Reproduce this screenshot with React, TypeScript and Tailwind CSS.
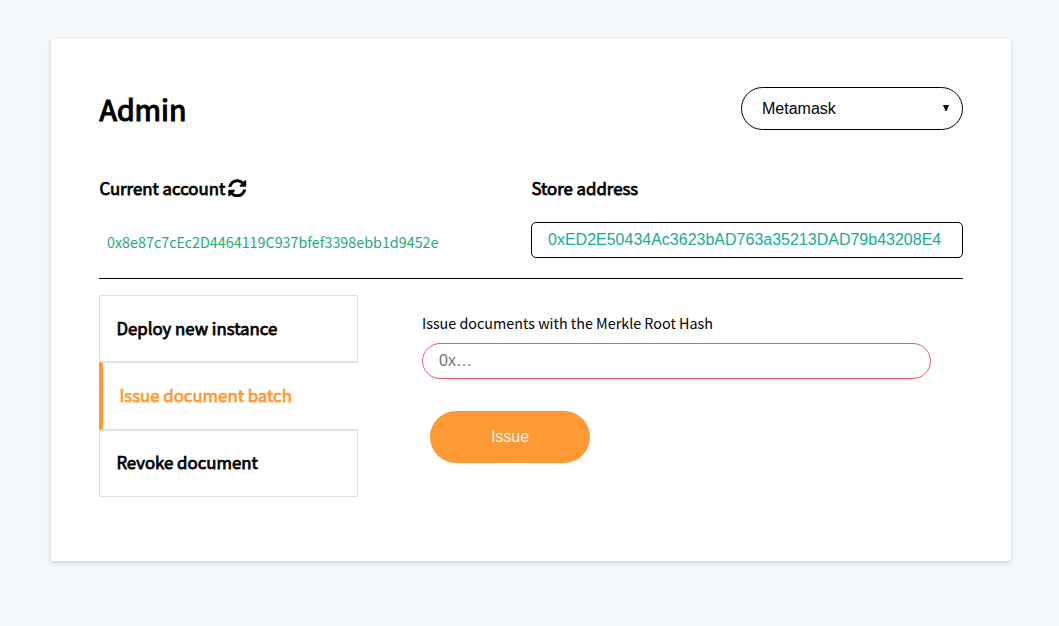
import type { ReactNode } from "react";
import { FaSyncAlt } from "react-icons/fa";

const tabs = ["Deploy new instance", "Issue document batch", "Revoke document"];

function Heading({ children }: { children: ReactNode }) {
  return (
    <h3 className="flex h-6 items-center whitespace-nowrap pl-[0.4px] text-[16.8px] font-normal leading-6 [-webkit-text-stroke:0.75px_currentColor]">
      {children}
    </h3>
  );
}

function Tab({ label, active }: { label: string; active: boolean }) {
  return (
    <button
      className={
        active
          ? "flex h-[67.33px] w-full border-y border-l-4 border-y-[#e3e3e3] border-l-[#ff9933] pl-4 pt-[19.6px] text-[#ff9933]"
          : "flex h-[67.33px] w-full border border-[#e3e3e3] pl-4 pt-[19.6px] text-black"
      }
    >
      <Heading>{label}</Heading>
    </button>
  );
}

export default function App() {
  return (
    <div className="min-h-screen bg-[#f4f8fb] pl-[51px] pt-[39px] font-['Noto_Sans_CJK_SC',sans-serif] text-black">
      <main className="h-[522px] w-[960px] rounded-[3px] bg-white px-12 pt-12 shadow-[0_2px_5px_rgba(0,0,0,0.15)]">
        <header className="flex h-[43px] justify-between">
          <h1 className="pl-[0.5px] text-[28.6px] leading-[44px] [-webkit-text-stroke:1.2px_currentColor]">Admin</h1>
          <button className="flex h-[43px] w-[222px] items-center justify-between rounded-full border border-black pl-5 pr-[13px] font-['Liberation_Sans',sans-serif] text-base">
            <span>Metamask</span>
            <svg className="mb-[2px] h-[6px] w-[6px]" viewBox="0 0 6 6"><path d="M0 0h6L3.5 6h-1z" /></svg>
          </button>
        </header>

        <section className="mt-[46px] grid h-[103px] grid-cols-2 border-b border-black">
          <div>
            <Heading>
              Current account
              <FaSyncAlt className="ml-[3px] h-[18.5px] w-[18.5px]" />
            </Heading>
            <p className="mt-[30px] pl-2 text-[14.33px] leading-6 text-[#1bab77]">
              0x8e87c7cEc2D4464119C937bfef3398ebb1d9452e
            </p>
          </div>
          <div>
            <Heading>Store address</Heading>
            <input
              className="mt-[22px] block h-9 w-full rounded-[5px] border border-black px-4 font-['Liberation_Sans',sans-serif] text-base text-[#17ad94] outline-none"
              defaultValue="0xED2E50434Ac3623bAD763a35213DAD79b43208E4"
            />
          </div>
        </section>

        <section className="mt-4 flex">
          <nav className="w-[259px]">
            {tabs.map((label, i) => (
              <Tab key={label} label={label} active={i === 1} />
            ))}
          </nav>
          <div className="ml-16 w-[509px] pt-4">
            <p className="text-[14.33px] leading-6">Issue documents with the Merkle Root Hash</p>
            <input
              className="mt-2 block h-9 w-full rounded-full border border-[#e25f66] px-4 font-['Liberation_Sans',sans-serif] text-base outline-none placeholder:text-[#757575]"
              placeholder="0x…"
            />
            <button className="ml-2 mt-8 h-[52px] w-40 rounded-full bg-[#ff9933] font-['Liberation_Sans',sans-serif] text-base text-[#fff8f0]">
              Issue
            </button>
          </div>
        </section>
      </main>
    </div>
  );
}
